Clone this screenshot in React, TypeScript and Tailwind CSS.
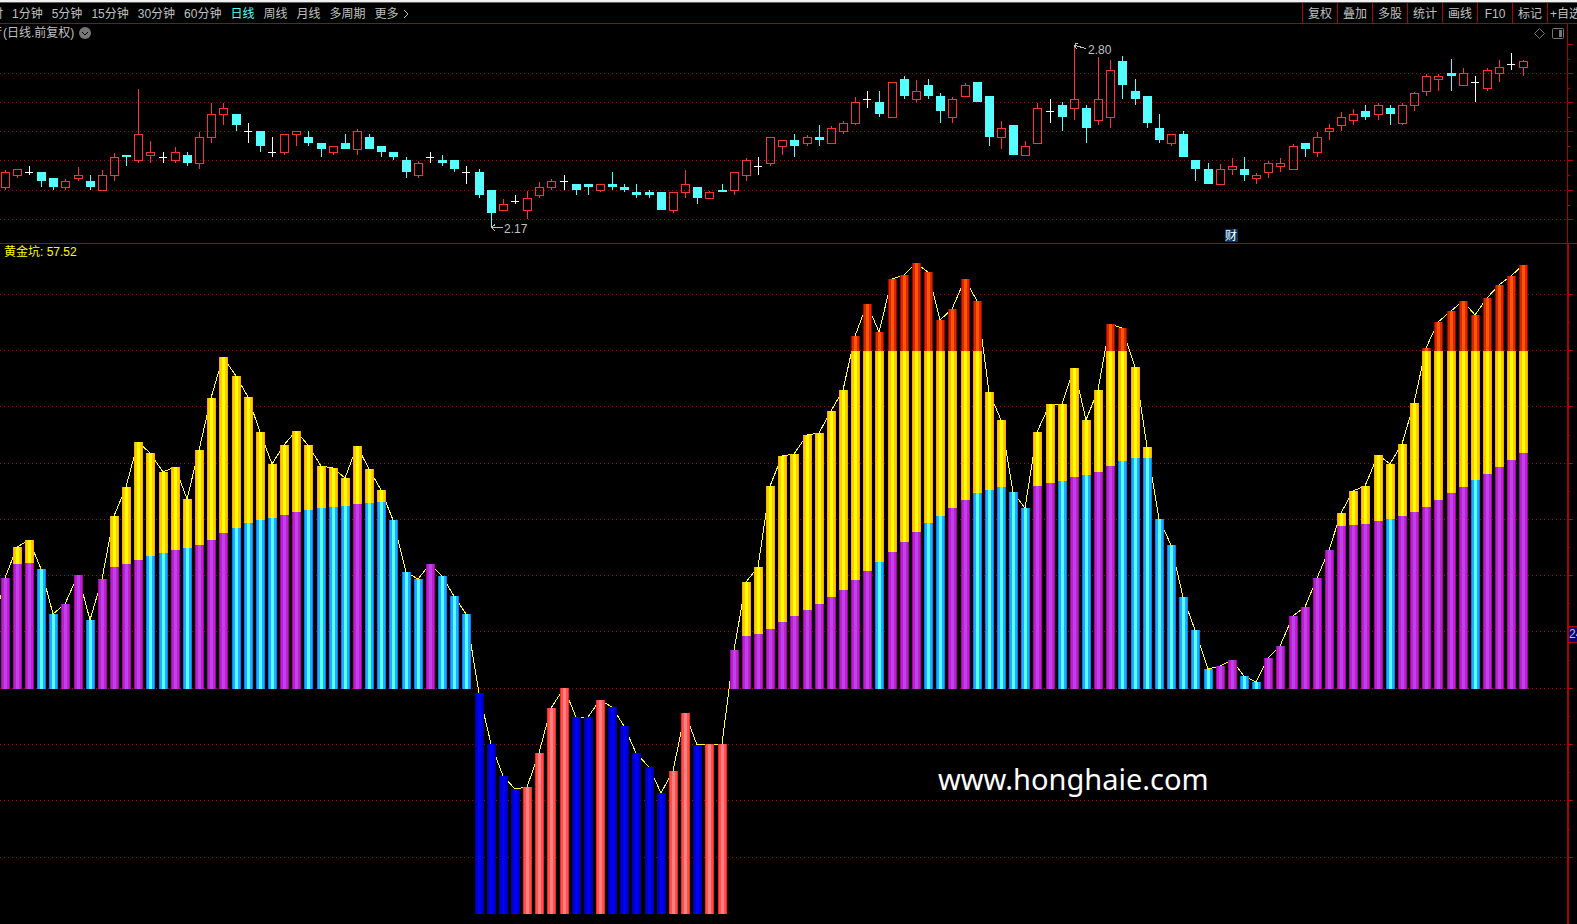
import { useState } from 'react';

type CandleKind = 'r' | 'c' | 'w';
type Candle = [kind: CandleKind, high: number, top: number, bottom: number, low: number];

type BarKind = 'm' | 'c' | 'b' | 'r';
type Bar = [kind: BarKind, top: number, split?: number];

const PERIODS = ['1分钟', '5分钟', '15分钟', '30分钟', '60分钟', '日线', '周线', '月线', '多周期'];
const TOOLS = ['复权', '叠加', '多股', '统计', '画线', 'F10', '标记'];

// r: up, c: down, w: flat
const CANDLES: Candle[] = [
  ['r', 170, 172, 188, 190], ['r', 169, 169, 176, 178], ['w', 166, 172, 173, 175], ['c', 172, 172, 181, 187],
  ['c', 178, 178, 187, 190], ['r', 179, 181, 188, 190], ['r', 167, 175, 179, 181], ['c', 175, 181, 187, 190],
  ['r', 170, 175, 191, 191], ['r', 153, 157, 176, 181], ['c', 155, 155, 157, 166], ['r', 89, 134, 161, 163],
  ['r', 141, 152, 156, 163], ['w', 152, 157, 158, 163], ['r', 147, 152, 161, 163], ['c', 152, 155, 163, 166],
  ['r', 132, 137, 164, 169], ['r', 103, 114, 138, 143], ['r', 103, 108, 115, 125], ['c', 114, 114, 125, 131],
  ['w', 123, 131, 132, 143], ['c', 131, 131, 146, 152], ['w', 137, 152, 153, 157], ['r', 134, 134, 153, 155],
  ['r', 131, 131, 135, 146], ['c', 131, 137, 143, 146], ['c', 143, 143, 149, 157], ['r', 146, 146, 153, 155],
  ['c', 134, 143, 149, 149], ['r', 129, 131, 150, 155], ['c', 134, 137, 149, 149], ['c', 146, 146, 152, 157],
  ['c', 152, 152, 157, 160], ['c', 157, 160, 172, 178], ['r', 161, 163, 176, 178], ['w', 152, 157, 158, 163],
  ['c', 155, 160, 163, 166], ['c', 160, 160, 169, 172], ['w', 166, 172, 173, 184], ['c', 169, 172, 195, 198],
  ['c', 190, 190, 213, 228], ['r', 199, 204, 211, 211], ['w', 195, 201, 202, 204], ['r', 191, 198, 211, 219],
  ['r', 182, 187, 196, 198], ['r', 179, 181, 188, 190], ['w', 175, 181, 182, 190], ['c', 184, 184, 190, 195],
  ['c', 184, 184, 187, 195], ['r', 184, 184, 191, 192], ['c', 172, 184, 187, 190], ['c', 184, 187, 190, 192],
  ['c', 184, 192, 195, 198], ['c', 190, 192, 195, 198], ['c', 192, 192, 210, 210], ['r', 192, 192, 211, 213],
  ['r', 170, 184, 193, 198], ['c', 187, 187, 198, 204], ['r', 191, 192, 199, 199], ['c', 184, 190, 192, 192],
  ['r', 172, 172, 191, 195], ['r', 158, 160, 176, 181], ['w', 157, 166, 167, 175], ['r', 137, 137, 164, 166],
  ['r', 140, 140, 147, 155], ['c', 134, 140, 146, 157], ['r', 135, 137, 144, 146], ['c', 125, 137, 140, 146],
  ['r', 126, 128, 144, 144], ['r', 121, 123, 132, 134], ['r', 97, 102, 124, 125], ['w', 91, 99, 100, 108],
  ['c', 91, 102, 114, 117], ['r', 82, 82, 118, 118], ['c', 76, 79, 96, 99], ['r', 80, 91, 100, 102],
  ['c', 79, 85, 96, 99], ['c', 93, 96, 111, 123], ['r', 97, 99, 118, 123], ['r', 83, 85, 97, 97],
  ['c', 82, 82, 102, 102], ['c', 96, 96, 137, 146], ['r', 121, 128, 138, 149], ['c', 125, 125, 155, 155],
  ['r', 141, 146, 156, 156], ['r', 103, 108, 144, 144], ['w', 99, 111, 112, 123], ['c', 102, 105, 117, 131],
  ['r', 46, 99, 109, 120], ['c', 105, 108, 128, 143], ['r', 57, 99, 121, 125], ['r', 60, 70, 118, 128],
  ['c', 56, 61, 85, 99], ['c', 79, 91, 99, 105], ['c', 96, 96, 123, 128], ['c', 114, 128, 140, 143],
  ['r', 134, 134, 144, 146], ['c', 131, 134, 157, 157], ['c', 160, 160, 169, 181], ['c', 163, 169, 184, 184],
  ['r', 164, 169, 185, 185], ['r', 158, 166, 170, 175], ['c', 157, 169, 175, 181], ['r', 173, 175, 179, 184],
  ['r', 161, 163, 173, 178], ['r', 158, 163, 167, 172], ['r', 144, 146, 170, 170], ['c', 143, 143, 149, 157],
  ['r', 132, 137, 153, 157], ['r', 124, 128, 132, 140], ['r', 112, 117, 126, 131], ['r', 109, 114, 121, 125],
  ['c', 105, 111, 117, 120], ['r', 103, 105, 115, 120], ['c', 105, 108, 114, 125], ['r', 103, 105, 124, 125],
  ['r', 92, 93, 106, 111], ['r', 74, 76, 92, 96], ['r', 74, 76, 80, 91], ['c', 59, 73, 76, 91],
  ['r', 68, 73, 86, 86], ['w', 76, 82, 83, 102], ['r', 68, 70, 89, 91], ['r', 60, 67, 74, 82],
  ['w', 53, 64, 65, 70], ['r', 60, 61, 68, 76],
];

// m / c stand on the zero line, b / r hang below it
const BARS: Bar[] = [
  ['m', 578], ['m', 547, 564], ['m', 540, 563], ['c', 569], ['c', 614], ['m', 604], ['m', 575], ['c', 620],
  ['m', 579], ['m', 516, 567], ['m', 487, 564], ['m', 442, 560], ['c', 453, 556], ['c', 472, 553], ['m', 467, 550],
  ['c', 499, 548], ['m', 450, 545], ['m', 398, 540], ['m', 357, 533], ['c', 376, 528], ['c', 397, 523],
  ['c', 432, 520], ['c', 464, 518], ['m', 445, 515], ['m', 431, 512], ['c', 445, 510], ['c', 466, 508],
  ['c', 468, 507], ['c', 478, 506], ['m', 446, 504], ['c', 469, 503], ['c', 490, 502], ['c', 520], ['c', 572],
  ['c', 579], ['m', 564], ['c', 576], ['c', 596], ['c', 614],
  ['b', 693], ['b', 744], ['b', 776], ['b', 789], ['r', 787], ['r', 753], ['r', 708], ['r', 688], ['b', 717],
  ['b', 717], ['r', 700], ['b', 707], ['b', 726], ['b', 753], ['b', 767], ['b', 793], ['r', 771], ['r', 713],
  ['b', 745], ['r', 744], ['r', 744],
  ['m', 650], ['m', 582, 636], ['m', 567, 634], ['m', 486, 629], ['m', 456, 622], ['m', 454, 616], ['m', 435, 610],
  ['m', 433, 604], ['m', 411, 597], ['m', 390, 590], ['m', 336, 580], ['m', 304, 571], ['c', 332, 562],
  ['m', 279, 552], ['m', 275, 542], ['m', 263, 532], ['c', 272, 523], ['c', 320, 516], ['m', 309, 508],
  ['m', 279, 500], ['c', 301, 493], ['c', 392, 490], ['c', 420, 487], ['c', 492], ['c', 508], ['m', 432, 486],
  ['m', 404, 483], ['c', 404, 481], ['m', 368, 477], ['c', 420, 475], ['m', 390, 472], ['m', 324, 466],
  ['c', 328, 461], ['c', 367, 458], ['c', 447, 458], ['c', 519], ['c', 545], ['c', 597], ['c', 630], ['c', 669],
  ['m', 666], ['m', 660], ['c', 676], ['c', 682], ['m', 658], ['m', 646], ['m', 616], ['m', 607], ['m', 578],
  ['m', 550], ['m', 513, 526], ['m', 491, 525], ['m', 486, 524], ['m', 455, 521], ['c', 464, 519], ['m', 444, 516],
  ['m', 403, 512], ['m', 348, 507], ['m', 322, 500], ['m', 311, 493], ['m', 301, 487], ['c', 315, 480],
  ['m', 298, 474], ['m', 285, 467], ['m', 276, 460], ['m', 265, 453],
];

const PRICE_GRID = [73, 102, 131, 160, 190, 219];
const PRICE_MINOR = [59, 88, 117, 146, 175, 205];
const PIT_GRID = [294, 350, 406, 463, 519, 575, 631, 688, 744, 800, 857];
const PIT_MINOR = [322, 378, 435, 491, 547, 603, 660, 716, 772, 829];

const ZERO = 689;
const FLOOR = 914;
const HOT = 351;
const AXIS_X = 1567;

// edge, side and middle stripe of a column
const SHADES = {
  m: ['#aa00aa', '#bb22cc', '#bf40ef'],
  c: ['#0080ff', '#22aaff', '#55ffff'],
  b: ['#0000aa', '#0000c8', '#0000ff'],
  r: ['#ff2020', '#ff5050', '#ff8080'],
  yellow: ['#ffaa00', '#ffcc00', '#ffff00'],
  hot: ['#aa0000', '#d42a00', '#ff5500'],
};

const xOf = (i: number) => Math.floor(12.15 * i + 1.17);

function GridLines({ rows }: { rows: number[] }) {
  return (
    <g stroke="#b00000" strokeDasharray="1 3">
      {rows.map((y) => (
        <line key={y} x1={0} x2={AXIS_X} y1={y + 0.5} y2={y + 0.5} />
      ))}
    </g>
  );
}

function Ticks({ major, minor }: { major: number[]; minor: number[] }) {
  return (
    <g fill="#b00000">
      {major.map((y) => (
        <rect key={y} x={AXIS_X} y={y} width={6} height={1} />
      ))}
      {minor.map((y) => (
        <rect key={y} x={AXIS_X} y={y} width={3} height={1} />
      ))}
    </g>
  );
}

function CandleShape({ x, candle }: { x: number; candle: Candle }) {
  const [kind, high, top, bottom, low] = candle;
  if (kind === 'w') {
    return (
      <g fill="#ffffff">
        <rect x={x} y={top} width={8} height={1} />
        <rect x={x + 4} y={high} width={1} height={low - high} />
      </g>
    );
  }
  if (kind === 'c') {
    return (
      <g fill="#55ffff">
        <rect x={x} y={top} width={9} height={bottom - top} />
        <rect x={x + 4} y={high} width={1} height={low - high} />
      </g>
    );
  }
  return (
    <g fill="#ff3232">
      <rect x={x + 4} y={high} width={1} height={top - high} />
      <rect x={x + 4} y={bottom} width={1} height={low - bottom} />
      <rect x={x + 0.5} y={top + 0.5} width={8} height={bottom - top - 1} fill="none" stroke="#ff3232" />
    </g>
  );
}

function Column({ x, y1, y2, shades }: { x: number; y1: number; y2: number; shades: string[] }) {
  return (
    <>
      <rect x={x} y={y1} width={9} height={y2 - y1} fill={shades[0]} />
      <rect x={x + 1} y={y1} width={7} height={y2 - y1} fill={shades[1]} />
      <rect x={x + 3} y={y1} width={3} height={y2 - y1} fill={shades[2]} />
    </>
  );
}

function BarShape({ x, bar }: { x: number; bar: Bar }) {
  const [kind, top, split] = bar;
  const base = kind === 'b' || kind === 'r' ? FLOOR : ZERO;
  return (
    <g>
      <Column x={x} y1={split ?? top} y2={base} shades={SHADES[kind]} />
      {split && <Column x={x} y1={Math.max(top, HOT)} y2={split} shades={SHADES.yellow} />}
      {top < HOT && <Column x={x} y1={top} y2={HOT} shades={SHADES.hot} />}
    </g>
  );
}

function PriceChart() {
  return (
    <svg
      viewBox="0 42 1577 201"
      className="block w-full overflow-visible"
      shapeRendering="crispEdges"
      role="img"
      aria-label="日线"
    >
      <GridLines rows={PRICE_GRID} />
      <rect x={AXIS_X} y={42} width={1} height={201} fill="#b00000" />
      <Ticks major={[44, ...PRICE_GRID]} minor={PRICE_MINOR} />
      {CANDLES.map((candle, i) => (
        <CandleShape key={i} x={xOf(i)} candle={candle} />
      ))}
      <g fill="none" stroke="#c0c0c0">
        <path d="M491 227.5H503M495 224.5L491.5 227.5L495 231" />
        <path d="M1075 45.5L1086 48.5M1078 43.5H1075.5L1074.5 46L1077 49" />
      </g>
      <g fill="#c0c0c0" className="font-['Liberation_Sans',sans-serif] text-[12px]">
        <text x={504} y={233}>2.17</text>
        <text x={1088} y={54}>2.80</text>
      </g>
      <rect x={1225} y={229} width={13} height={13} fill="#003366" />
      <text x={1225} y={240} fill="#ffffff" className="font-['Noto_Sans_CJK_SC',sans-serif] text-[12px]">
        财
      </text>
    </svg>
  );
}

function PitChart() {
  const points = BARS.map(([, top], i) => `${xOf(i) + 4},${top}`).join(' ');
  return (
    <svg
      viewBox="0 262 1577 662"
      className="block w-full"
      shapeRendering="crispEdges"
      role="img"
      aria-label="黄金坑"
    >
      <GridLines rows={PIT_GRID} />
      <rect x={AXIS_X} y={262} width={2} height={662} fill="#b00000" />
      <Ticks major={PIT_GRID} minor={PIT_MINOR} />
      <polyline points={`0,599 ${points}`} fill="none" stroke="#ffff33" />
      {BARS.map((bar, i) => (
        <BarShape key={i} x={xOf(i)} bar={bar} />
      ))}
      <rect x={1569} y={626} width={10} height={17} fill="#b00000" />
      <rect x={1569} y={627} width={10} height={15} fill="#000080" />
      <text x={1569} y={638} fill="#c0c0c0" className="font-['Liberation_Sans',sans-serif] text-[12px]">
        24
      </text>
      <text x={938} y={790} fill="#ffffff" className="font-['Noto_Sans',sans-serif] text-[29px]">
        www.honghaie.com
      </text>
    </svg>
  );
}

export default function App() {
  const [period, setPeriod] = useState('日线');

  return (
    <div className="min-h-screen overflow-hidden bg-black font-['Liberation_Sans','Noto_Sans_CJK_SC',sans-serif] text-[12px] text-[#c0c0c0]">
      <header className="flex h-6 items-stretch justify-between overflow-hidden border-t-2 border-b border-t-[#f0f0f0] border-b-[#b00000]">
        <nav className="flex grow items-center gap-[9px] border-t border-[#606060] pt-[2px] whitespace-nowrap">
          <button type="button" className="flex w-[3px] justify-end overflow-hidden">
            分时
          </button>
          {PERIODS.map((p) => (
            <button
              key={p}
              type="button"
              className={p === period ? 'text-[#55ffff]' : ''}
              onClick={() => setPeriod(p)}
            >
              {p}
            </button>
          ))}
          <button type="button" className="flex items-center gap-1">
            更多
            <svg viewBox="0 0 6 10" className="h-[10px] w-[6px]" fill="none" stroke="currentColor">
              <path d="M1 1L5 5L1 9" />
            </svg>
          </button>
        </nav>
        <div className="flex shrink-0 border-t border-[#606060] whitespace-nowrap">
          {TOOLS.map((t) => (
            <button key={t} type="button" className="w-[35px] border-l border-[#b00000] pt-[2px]">
              {t}
            </button>
          ))}
          <button
            type="button"
            className="w-[30px] overflow-hidden border-l border-[#b00000] pt-[2px] pl-[2px] text-left"
          >
            +自选
          </button>
        </div>
      </header>

      <section className="border-b border-[#b00000]">
        <div className="mr-[9px] flex h-[18px] items-center justify-between border-r border-[#b00000] pr-[3px]">
          <div className="flex items-center gap-[5px]">
            <h2 className="flex gap-[1px] whitespace-nowrap">
              <span className="flex w-[2px] justify-end overflow-hidden">行</span>
              (日线.前复权)
            </h2>
            <button type="button" aria-label="展开">
              <svg viewBox="0 0 12 12" className="size-3">
                <circle cx={6} cy={6} r={6} fill="#777777" />
                <path d="M3 5L6 8L9 5" fill="none" stroke="#000000" />
              </svg>
            </button>
          </div>
          <div className="flex items-center gap-[7px] text-[#777777]">
            <button type="button" aria-label="标记">
              <svg viewBox="0 0 11 11" className="size-[11px]" fill="none" stroke="currentColor">
                <path d="M5.5 0.5L10.5 5.5L5.5 10.5L0.5 5.5Z" />
              </svg>
            </button>
            <button type="button" aria-label="侧栏">
              <svg viewBox="0 0 12 11" className="h-[11px] w-3" fill="none" stroke="currentColor">
                <rect x={0.5} y={0.5} width={11} height={10} rx={1} />
                <rect x={7} y={2} width={3} height={7} fill="currentColor" stroke="none" />
              </svg>
            </button>
          </div>
        </div>
        <PriceChart />
      </section>

      <section>
        <div className="mr-2 flex h-[18px] items-center border-r-2 border-[#b00000] pb-[2px] pl-1 text-[#ffff00]">
          <h2>黄金坑: 57.52</h2>
        </div>
        <PitChart />
      </section>
    </div>
  );
}
